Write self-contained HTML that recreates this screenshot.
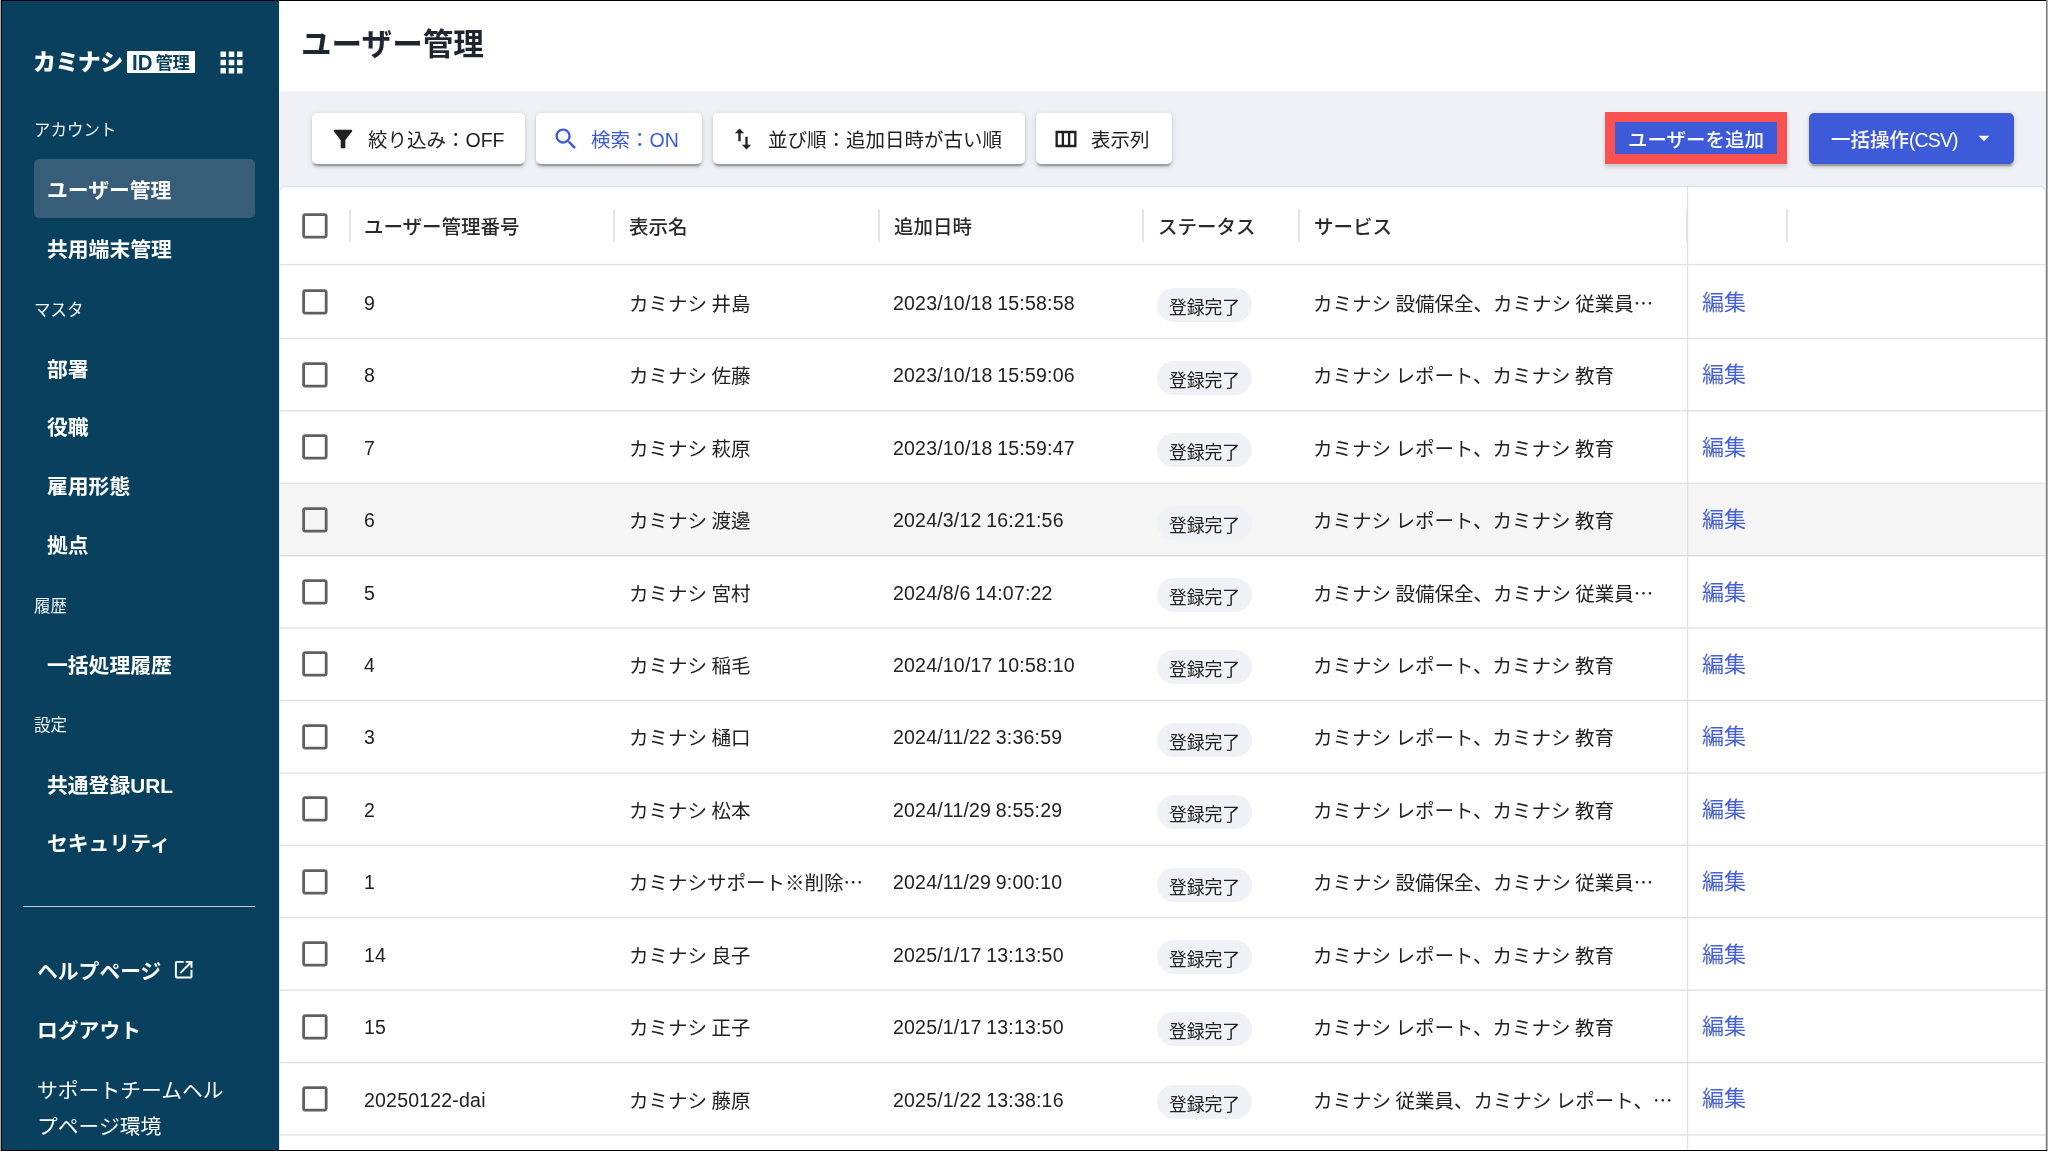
<!DOCTYPE html>
<html lang="ja">
<head>
<meta charset="utf-8">
<title>ユーザー管理 | カミナシ ID管理</title>
<style>
*{box-sizing:border-box;margin:0;padding:0}
html,body{width:2048px;height:1151px;overflow:hidden;background:#000}
body{font-family:"Liberation Sans","Noto Sans CJK JP",sans-serif;color:#212121;position:relative;-webkit-font-smoothing:antialiased}
.jp{font-family:"Noto Sans CJK JP",sans-serif;line-height:0}
#edgeL{position:absolute;left:0;top:0;width:1px;height:1151px;background:#a9a9a9}
#edgeR1{position:absolute;left:2046px;top:0;width:1px;height:1150px;background:#7d7d7d}
#edgeR2{position:absolute;left:2047px;top:0;width:1px;height:1151px;background:#b2b2b2}
#app{position:absolute;left:2px;top:1px;width:2044px;height:1149px;background:#fff;overflow:hidden;will-change:transform}
/* ---------- sidebar ---------- */
#side{position:absolute;left:0;top:0;width:277px;height:1149px;background:#08405e;color:#fff}
#side .abs{position:absolute;white-space:nowrap}
#logo{left:31px;top:44px;font-size:23px;font-weight:900;line-height:34px;letter-spacing:-0.6px}
#idbox{left:125px;top:50px;width:68px;height:22px;background:#fff;color:#08405e;line-height:22px;font-weight:700}
#idbox .id{position:absolute;left:5px;top:1px;font-size:22px;font-weight:700;transform:scaleX(.93);transform-origin:0 50%}
#idbox .kk{position:absolute;left:28.5px;top:1px;font-size:17.3px;letter-spacing:-.3px}
#apps{left:212.7px;top:44.7px;width:33px;height:33px}
.lbl{left:32px;font-size:16.5px;line-height:24px;font-weight:400;color:#f1f5f7}
.nav{left:45px;font-size:20.8px;line-height:30px;font-weight:700}
#sel{position:absolute;left:32px;top:158px;width:221px;height:59px;border-radius:5px;background:#375d78}
#hr{position:absolute;left:21px;top:905px;width:232px;height:1.4px;background:rgba(255,255,255,.72)}
.nav2{left:35px;font-size:20.8px;line-height:30px;font-weight:700}
#env{left:35px;top:1072px;font-size:20.8px;line-height:35.8px;font-weight:400;white-space:normal!important;width:200px}
/* ---------- main ---------- */
#main{position:absolute;left:277px;top:0;width:1767px;height:1149px;background:#eff1f6}
#head{position:absolute;left:0;top:0;width:1767px;height:90px;background:#fff}
#head h1{position:absolute;left:22px;top:20px;font-size:30.6px;line-height:46px;font-weight:700;color:#1f2630;white-space:nowrap}
.btn{position:absolute;top:112px;height:51px;border-radius:5px;background:#fff;box-shadow:0 4px 1.3px -2.6px rgba(0,0,0,.2),0 2.6px 2.6px 0 rgba(0,0,0,.14),0 1.3px 6.5px 0 rgba(0,0,0,.12);font-size:19.5px;line-height:51px;white-space:nowrap;color:#212121}
.btn svg{position:absolute;top:11.5px;width:28px;height:28px;fill:currentColor}
.btn span{position:absolute;top:2px}
.btn.blue{color:#3d5ad8}
.btn.pri{background:#3d5ad8;color:#fff;font-weight:500}
/* ---------- grid ---------- */
#grid{position:absolute;left:1px;top:186px;width:1765px;height:970px;background:#fff;border-radius:5px 5px 0 0;box-shadow:0 0 2px rgba(0,0,0,.22);overflow:hidden;font-size:19.5px;color:#212121}
#grid .thead{position:absolute;left:0;top:0;width:100%;height:78px;line-height:80px;font-weight:500;color:#2a2a2a}
#grid .th{position:absolute;top:0;white-space:nowrap}
#grid .sep{position:absolute;top:22px;width:2px;height:33px;background:#e5e5e5}
#grid .cb{position:absolute;left:18.2px;width:33.8px;height:33.8px;fill:#606060}
#grid .thead .cb{top:21.7px}
#grid .tr{position:absolute;left:0;width:100%;background:#fff}
#grid .hl{position:absolute;left:0;width:100%;height:1px;background:rgba(0,0,0,.122)}
#grid .tr.hov{background:#f5f5f5}
#grid .td{position:absolute;height:30px;line-height:30px;white-space:nowrap;word-spacing:-1px}
.c1{left:84px;letter-spacing:.2px;margin-top:-1px}.c2{left:349px}.c3{left:613px;letter-spacing:.2px;margin-top:-1px}.c5{left:1033px}.c6{left:1422px;font-size:22px;color:#4561d9}
.pill{position:absolute;left:877px;font-style:normal;height:34px;line-height:40px;padding:0 12px;border-radius:17px;background:#f0f1f6;font-size:17.8px}
#pinline{position:absolute;left:1407px;top:0;width:1px;height:100%;background:#e0e0e0;box-shadow:1px 0 0 rgba(0,0,0,.025)}
</style>
</head>
<body>
<div id="edgeL"></div><div id="edgeR1"></div><div id="edgeR2"></div>
<div id="app">

<nav id="side">
  <div class="abs" id="logo">カミナシ</div>
  <div class="abs" id="idbox"><span class="id">ID</span><span class="kk">管理</span></div>
  <svg class="abs" id="apps" viewBox="0 0 24 24"><path fill="#fff" d="M4 8h4V4H4v4zm6 12h4v-4h-4v4zm-6 0h4v-4H4v4zm0-6h4v-4H4v4zm6 0h4v-4h-4v4zm6-10v4h4V4h-4zm-6 4h4V4h-4v4zm6 6h4v-4h-4v4zm0 6h4v-4h-4v4z"/></svg>

  <div class="abs lbl" style="top:117px">アカウント</div>
  <div id="sel"></div>
  <div class="abs nav" style="top:175px">ユーザー管理</div>
  <div class="abs nav" style="top:234px">共用端末管理</div>

  <div class="abs lbl" style="top:297px">マスタ</div>
  <div class="abs nav" style="top:354px">部署</div>
  <div class="abs nav" style="top:412px">役職</div>
  <div class="abs nav" style="top:471px">雇用形態</div>
  <div class="abs nav" style="top:530px">拠点</div>

  <div class="abs lbl" style="top:593px">履歴</div>
  <div class="abs nav" style="top:650px">一括処理履歴</div>

  <div class="abs lbl" style="top:712px">設定</div>
  <div class="abs nav" style="top:770px">共通登録URL</div>
  <div class="abs nav" style="top:828px">セキュリティ</div>

  <div id="hr"></div>
  <div class="abs nav2" style="top:956px">ヘルプページ</div>
  <svg class="abs" style="left:169.8px;top:957.2px;width:23.4px;height:23.4px" viewBox="0 0 24 24"><path fill="#fff" d="M19 19H5V5h7V3H5c-1.11 0-2 .9-2 2v14c0 1.1.89 2 2 2h14c1.1 0 2-.9 2-2v-7h-2v7zM14 3v2h3.590l-9.830 9.830 1.410 1.410L19 6.410V10h2V3h-7z"/></svg>
  <div class="abs nav2" style="top:1015px">ログアウト</div>
  <div class="abs" id="env">サポートチームヘルプページ環境</div>
</nav>

<main id="main">
  <header id="head"><h1>ユーザー管理</h1></header>

  <!-- toolbar -->
  <div class="btn" style="left:33px;width:213px">
    <svg style="left:17px" viewBox="0 0 24 24"><path d="M4.250 5.610C6.270 8.200 10 13 10 13v6c0 .550.450 1 1 1h2c.550 0 1-.450 1-1v-6s3.720-4.800 5.740-7.390c.510-.660.040-1.610-.790-1.610H5.040c-.830 0-1.300.950-.790 1.610z"/></svg>
    <span style="left:56px">絞り込み：OFF</span>
  </div>
  <div class="btn blue" style="left:257px;width:166px">
    <svg style="left:16px" viewBox="0 0 24 24"><path d="M15.500 14h-.790l-.280-.270C15.410 12.590 16 11.110 16 9.500 16 5.910 13.090 3 9.500 3S3 5.910 3 9.500 5.910 16 9.500 16c1.610 0 3.090-.590 4.230-1.570l.270.280v.790l5 4.990L20.490 19l-4.990-5zm-6 0C7.010 14 5 11.990 5 9.500S7.010 5 9.500 5 14 7.010 14 9.500 11.990 14 9.500 14z"/></svg>
    <span style="left:55px">検索：ON</span>
  </div>
  <div class="btn" style="left:434px;width:312px">
    <svg style="left:16px" viewBox="0 0 24 24"><path d="M16 17.010V10h-2v7.010h-3L15 21l4-3.990h-3zM9 3 5 6.990h3V14h2V6.990h3L9 3z"/></svg>
    <span style="left:55px">並び順：追加日時が古い順</span>
  </div>
  <div class="btn" style="left:757px;width:136px">
    <svg style="left:16px" viewBox="0 0 24 24"><path d="M3 5v14h18V5H3zm5.330 12H5V7h3.330v10zm5.340 0h-3.330V7h3.330v10zM19 17h-3.330V7H19v10z"/></svg>
    <span style="left:55px">表示列</span>
  </div>

  <div id="addwrap" style="position:absolute;left:1326px;top:111px;width:182px;height:52px;background:#f95251;box-shadow:0 3px 4px rgba(0,0,0,.18)">
    <div style="position:absolute;left:10px;top:10px;width:162px;height:32px;background:#3d5ad8;color:#fff;font-size:19.5px;line-height:36px;font-weight:500;text-align:center;white-space:nowrap">ユーザーを追加</div>
  </div>
  <div class="btn pri" style="left:1530px;width:205px">
    <span style="left:22px">一括操作<span style="position:static;letter-spacing:-.9px">(CSV)</span></span>
    <svg style="left:162px;top:12px;width:26px;height:26px" viewBox="0 0 24 24"><path d="M7 10l5 5 5-5z"/></svg>
  </div>

  <!-- TABLE -->
<section id="grid">
 <div class="thead">
  <svg class="cb" viewBox="0 0 24 24"><path d="M19 5v14H5V5h14m0-2H5c-1.100 0-2 .900-2 2v14c0 1.100.900 2 2 2h14c1.100 0 2-.900 2-2V5c0-1.100-.900-2-2-2z"/></svg>
  <b class="sep" style="left:69px"></b><span class="th" style="left:84px">ユーザー管理番号</span>
  <b class="sep" style="left:333px"></b><span class="th" style="left:349px">表示名</span>
  <b class="sep" style="left:598px"></b><span class="th" style="left:614px">追加日時</span>
  <b class="sep" style="left:862px"></b><span class="th" style="left:878px">ステータス</span>
  <b class="sep" style="left:1018px"></b><span class="th" style="left:1034px">サービス</span>
  <b class="sep" style="left:1406px"></b>
  <b class="sep" style="left:1506px"></b>
 </div>
 <div class="tr" style="top:78px;height:74px">
  <svg class="cb" style="top:20.3px" viewBox="0 0 24 24"><path d="M19 5v14H5V5h14m0-2H5c-1.100 0-2 .900-2 2v14c0 1.100.900 2 2 2h14c1.100 0 2-.900 2-2V5c0-1.100-.900-2-2-2z"/></svg><span class="td c1" style="top:23.9px">9</span><span class="td c2" style="top:23.9px">カミナシ 井島</span><span class="td c3" style="top:23.9px">2023/10/18 15:58:58</span><em class="pill" style="top:23.2px">登録完了</em><span class="td c5" style="top:23.9px">カミナシ 設備保全、カミナシ 従業員<span class="jp">…</span></span><a class="td c6" style="top:22.8px">編集</a>
 </div>
 <div class="tr" style="top:152px;height:72px">
  <svg class="cb" style="top:18.7px" viewBox="0 0 24 24"><path d="M19 5v14H5V5h14m0-2H5c-1.100 0-2 .900-2 2v14c0 1.100.900 2 2 2h14c1.100 0 2-.900 2-2V5c0-1.100-.900-2-2-2z"/></svg><span class="td c1" style="top:22.3px">8</span><span class="td c2" style="top:22.3px">カミナシ 佐藤</span><span class="td c3" style="top:22.3px">2023/10/18 15:59:06</span><em class="pill" style="top:21.6px">登録完了</em><span class="td c5" style="top:22.3px">カミナシ レポート、カミナシ 教育</span><a class="td c6" style="top:21.2px">編集</a>
 </div>
 <div class="tr" style="top:224px;height:73px">
  <svg class="cb" style="top:19.1px" viewBox="0 0 24 24"><path d="M19 5v14H5V5h14m0-2H5c-1.100 0-2 .900-2 2v14c0 1.100.900 2 2 2h14c1.100 0 2-.900 2-2V5c0-1.100-.900-2-2-2z"/></svg><span class="td c1" style="top:22.7px">7</span><span class="td c2" style="top:22.7px">カミナシ 萩原</span><span class="td c3" style="top:22.7px">2023/10/18 15:59:47</span><em class="pill" style="top:22.0px">登録完了</em><span class="td c5" style="top:22.7px">カミナシ レポート、カミナシ 教育</span><a class="td c6" style="top:21.6px">編集</a>
 </div>
 <div class="tr hov" style="top:297px;height:72px">
  <svg class="cb" style="top:18.6px" viewBox="0 0 24 24"><path d="M19 5v14H5V5h14m0-2H5c-1.100 0-2 .900-2 2v14c0 1.100.900 2 2 2h14c1.100 0 2-.900 2-2V5c0-1.100-.900-2-2-2z"/></svg><span class="td c1" style="top:22.2px">6</span><span class="td c2" style="top:22.2px">カミナシ 渡邊</span><span class="td c3" style="top:22.2px">2024/3/12 16:21:56</span><em class="pill" style="top:21.5px">登録完了</em><span class="td c5" style="top:22.2px">カミナシ レポート、カミナシ 教育</span><a class="td c6" style="top:21.1px">編集</a>
 </div>
 <div class="tr" style="top:369px;height:73px">
  <svg class="cb" style="top:19.0px" viewBox="0 0 24 24"><path d="M19 5v14H5V5h14m0-2H5c-1.100 0-2 .900-2 2v14c0 1.100.900 2 2 2h14c1.100 0 2-.900 2-2V5c0-1.100-.900-2-2-2z"/></svg><span class="td c1" style="top:22.6px">5</span><span class="td c2" style="top:22.6px">カミナシ 宮村</span><span class="td c3" style="top:22.6px">2024/8/6 14:07:22</span><em class="pill" style="top:21.9px">登録完了</em><span class="td c5" style="top:22.6px">カミナシ 設備保全、カミナシ 従業員<span class="jp">…</span></span><a class="td c6" style="top:21.5px">編集</a>
 </div>
 <div class="tr" style="top:442px;height:72px">
  <svg class="cb" style="top:18.4px" viewBox="0 0 24 24"><path d="M19 5v14H5V5h14m0-2H5c-1.100 0-2 .900-2 2v14c0 1.100.900 2 2 2h14c1.100 0 2-.900 2-2V5c0-1.100-.900-2-2-2z"/></svg><span class="td c1" style="top:22.0px">4</span><span class="td c2" style="top:22.0px">カミナシ 稲毛</span><span class="td c3" style="top:22.0px">2024/10/17 10:58:10</span><em class="pill" style="top:21.3px">登録完了</em><span class="td c5" style="top:22.0px">カミナシ レポート、カミナシ 教育</span><a class="td c6" style="top:20.9px">編集</a>
 </div>
 <div class="tr" style="top:514px;height:72px">
  <svg class="cb" style="top:18.8px" viewBox="0 0 24 24"><path d="M19 5v14H5V5h14m0-2H5c-1.100 0-2 .900-2 2v14c0 1.100.900 2 2 2h14c1.100 0 2-.900 2-2V5c0-1.100-.900-2-2-2z"/></svg><span class="td c1" style="top:22.4px">3</span><span class="td c2" style="top:22.4px">カミナシ 樋口</span><span class="td c3" style="top:22.4px">2024/11/22 3:36:59</span><em class="pill" style="top:21.7px">登録完了</em><span class="td c5" style="top:22.4px">カミナシ レポート、カミナシ 教育</span><a class="td c6" style="top:21.3px">編集</a>
 </div>
 <div class="tr" style="top:586px;height:73px">
  <svg class="cb" style="top:19.2px" viewBox="0 0 24 24"><path d="M19 5v14H5V5h14m0-2H5c-1.100 0-2 .900-2 2v14c0 1.100.900 2 2 2h14c1.100 0 2-.900 2-2V5c0-1.100-.900-2-2-2z"/></svg><span class="td c1" style="top:22.8px">2</span><span class="td c2" style="top:22.8px">カミナシ 松本</span><span class="td c3" style="top:22.8px">2024/11/29 8:55:29</span><em class="pill" style="top:22.1px">登録完了</em><span class="td c5" style="top:22.8px">カミナシ レポート、カミナシ 教育</span><a class="td c6" style="top:21.7px">編集</a>
 </div>
 <div class="tr" style="top:659px;height:72px">
  <svg class="cb" style="top:18.7px" viewBox="0 0 24 24"><path d="M19 5v14H5V5h14m0-2H5c-1.100 0-2 .900-2 2v14c0 1.100.900 2 2 2h14c1.100 0 2-.900 2-2V5c0-1.100-.900-2-2-2z"/></svg><span class="td c1" style="top:22.3px">1</span><span class="td c2" style="top:22.3px">カミナシサポート※削除<span class="jp">…</span></span><span class="td c3" style="top:22.3px">2024/11/29 9:00:10</span><em class="pill" style="top:21.6px">登録完了</em><span class="td c5" style="top:22.3px">カミナシ 設備保全、カミナシ 従業員<span class="jp">…</span></span><a class="td c6" style="top:21.2px">編集</a>
 </div>
 <div class="tr" style="top:731px;height:73px">
  <svg class="cb" style="top:19.1px" viewBox="0 0 24 24"><path d="M19 5v14H5V5h14m0-2H5c-1.100 0-2 .900-2 2v14c0 1.100.900 2 2 2h14c1.100 0 2-.900 2-2V5c0-1.100-.900-2-2-2z"/></svg><span class="td c1" style="top:22.7px">14</span><span class="td c2" style="top:22.7px">カミナシ 良子</span><span class="td c3" style="top:22.7px">2025/1/17 13:13:50</span><em class="pill" style="top:22.0px">登録完了</em><span class="td c5" style="top:22.7px">カミナシ レポート、カミナシ 教育</span><a class="td c6" style="top:21.6px">編集</a>
 </div>
 <div class="tr" style="top:804px;height:72px">
  <svg class="cb" style="top:18.5px" viewBox="0 0 24 24"><path d="M19 5v14H5V5h14m0-2H5c-1.100 0-2 .900-2 2v14c0 1.100.900 2 2 2h14c1.100 0 2-.900 2-2V5c0-1.100-.900-2-2-2z"/></svg><span class="td c1" style="top:22.1px">15</span><span class="td c2" style="top:22.1px">カミナシ 正子</span><span class="td c3" style="top:22.1px">2025/1/17 13:13:50</span><em class="pill" style="top:21.4px">登録完了</em><span class="td c5" style="top:22.1px">カミナシ レポート、カミナシ 教育</span><a class="td c6" style="top:21.0px">編集</a>
 </div>
 <div class="tr" style="top:876px;height:72px">
  <svg class="cb" style="top:18.9px" viewBox="0 0 24 24"><path d="M19 5v14H5V5h14m0-2H5c-1.100 0-2 .900-2 2v14c0 1.100.900 2 2 2h14c1.100 0 2-.900 2-2V5c0-1.100-.900-2-2-2z"/></svg><span class="td c1" style="top:22.5px">20250122-dai</span><span class="td c2" style="top:22.5px">カミナシ 藤原</span><span class="td c3" style="top:22.5px">2025/1/22 13:38:16</span><em class="pill" style="top:21.8px">登録完了</em><span class="td c5" style="top:22.5px">カミナシ 従業員、カミナシ レポート、<span class="jp">…</span></span><a class="td c6" style="top:21.4px">編集</a>
 </div>
 <div class="tr" style="top:948px;height:20px;border:0"></div>
 <i class="hl" style="top:76px;opacity:0.05"></i>
 <i class="hl" style="top:77px;opacity:1.00"></i>
 <i class="hl" style="top:78px;opacity:0.25"></i>
 <i class="hl" style="top:150px;opacity:0.25"></i>
 <i class="hl" style="top:151px;opacity:1.00"></i>
 <i class="hl" style="top:152px;opacity:0.05"></i>
 <i class="hl" style="top:223px;opacity:0.83"></i>
 <i class="hl" style="top:224px;opacity:0.47"></i>
 <i class="hl" style="top:295px;opacity:0.41"></i>
 <i class="hl" style="top:296px;opacity:0.89"></i>
 <i class="hl" style="top:368px;opacity:0.99"></i>
 <i class="hl" style="top:369px;opacity:0.31"></i>
 <i class="hl" style="top:440px;opacity:0.57"></i>
 <i class="hl" style="top:441px;opacity:0.73"></i>
 <i class="hl" style="top:512px;opacity:0.15"></i>
 <i class="hl" style="top:513px;opacity:1.00"></i>
 <i class="hl" style="top:514px;opacity:0.15"></i>
 <i class="hl" style="top:585px;opacity:0.73"></i>
 <i class="hl" style="top:586px;opacity:0.57"></i>
 <i class="hl" style="top:657px;opacity:0.31"></i>
 <i class="hl" style="top:658px;opacity:0.99"></i>
 <i class="hl" style="top:730px;opacity:0.89"></i>
 <i class="hl" style="top:731px;opacity:0.41"></i>
 <i class="hl" style="top:802px;opacity:0.47"></i>
 <i class="hl" style="top:803px;opacity:0.83"></i>
 <i class="hl" style="top:874px;opacity:0.05"></i>
 <i class="hl" style="top:875px;opacity:1.00"></i>
 <i class="hl" style="top:876px;opacity:0.25"></i>
 <i class="hl" style="top:947px;opacity:0.63"></i>
 <i class="hl" style="top:948px;opacity:0.67"></i>
 <div id="pinline"></div>
</section>
<!-- /TABLE -->
</main>
</div>
</body>
</html>
